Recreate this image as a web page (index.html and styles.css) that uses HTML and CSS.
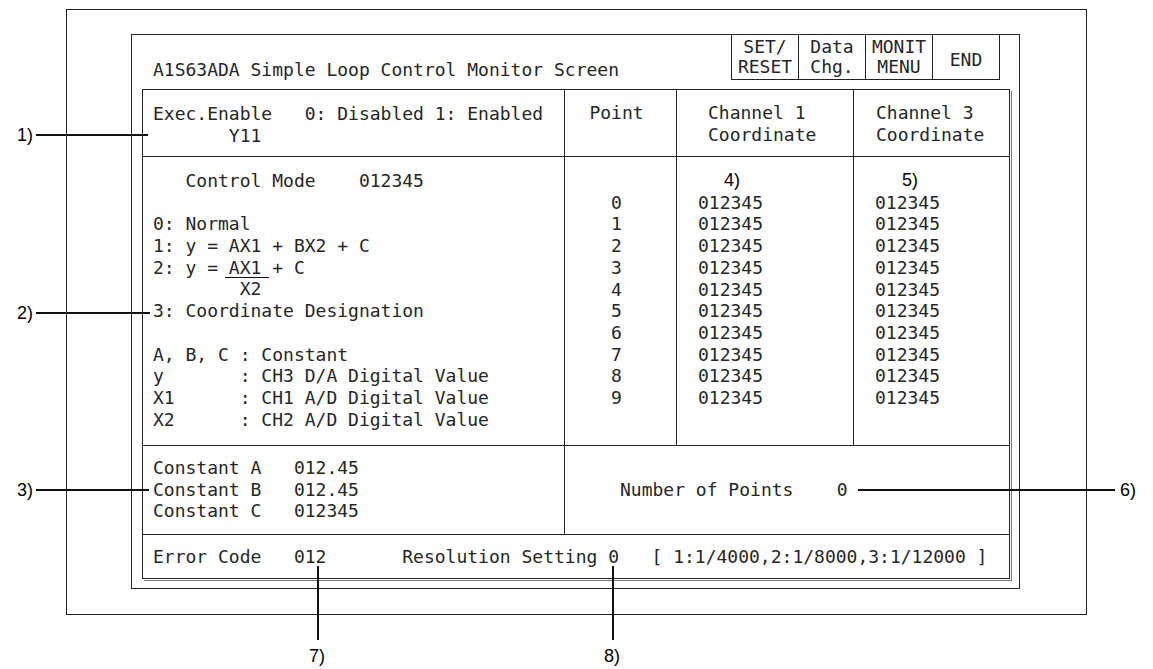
FILE: index.html
```html
<!DOCTYPE html>
<html>
  <head>
    <meta charset="UTF-8">
    <title>A1S63ADA Simple Loop Control Monitor Screen</title>
    <link rel="stylesheet" href="styles.css">
  </head>
  <body>
    <div class="figure">
      <div class="outer">
        <div class="screen">
          <div class="screen-head">
            <div class="title">A1S63ADA Simple Loop Control Monitor Screen</div>
            <div class="keys">
              <div class="key">SET/<br>RESET</div>
              <div class="key">Data<br>Chg.</div>
              <div class="key">MONIT<br>MENU</div>
              <div class="key key-end">END</div>
            </div>
          </div>
          <div class="grid">
            <div class="cell head exec">Exec.Enable   0: Disabled 1: Enabled
       Y11</div>
            <div class="cell head point-head">Point</div>
            <div class="cell head ch-head ch1-head">Channel 1
Coordinate</div>
            <div class="cell head ch-head ch3-head">Channel 3
Coordinate</div>

            <div class="cell data modes">
              <div class="ln">   Control Mode    012345</div>
              <div class="ln"></div>
              <div class="ln">0: Normal</div>
              <div class="ln">1: y = AX1 + BX2 + C</div>
              <div class="ln"><span>2: y = </span><span class="frac">AX1</span><span> + C</span></div>
              <div class="ln">        X2</div>
              <div class="ln">3: Coordinate Designation</div>
              <div class="ln"></div>
              <div class="ln">A, B, C : Constant</div>
              <div class="ln">y       : CH3 D/A Digital Value</div>
              <div class="ln">X1      : CH1 A/D Digital Value</div>
              <div class="ln">X2      : CH2 A/D Digital Value</div>
            </div>
            <div class="cell data points">0
1
2
3
4
5
6
7
8
9</div>
            <div class="cell data values">
              <div class="tag tag-ch1">4)</div>
              <div class="nums">012345
012345
012345
012345
012345
012345
012345
012345
012345
012345</div>
            </div>
            <div class="cell data values">
              <div class="tag tag-ch3">5)</div>
              <div class="nums">012345
012345
012345
012345
012345
012345
012345
012345
012345
012345</div>
            </div>

            <div class="cell constants">Constant A   012.45
Constant B   012.45
Constant C   012345</div>
            <div class="cell num-points">Number of Points    0</div>

            <div class="cell error-row">Error Code   012       Resolution Setting 0   [ 1:1/4000,2:1/8000,3:1/12000 ]</div>
          </div>
        </div>
      </div>

      <!-- callouts -->
      <div class="callout side c1">1)</div>
      <div class="lead l1"></div>
      <div class="callout side c2">2)</div>
      <div class="lead l2"></div>
      <div class="callout side c3">3)</div>
      <div class="lead l3"></div>
      <div class="callout c6">6)</div>
      <div class="lead l6"></div>
      <div class="callout c7">7)</div>
      <div class="lead l7"></div>
      <div class="callout c8">8)</div>
      <div class="lead l8"></div>
    </div>
  </body>
</html>
```

FILE: styles.css
```css
body {
  margin: 0;
  background-color: #FFFFFF;
  color: #262626;
  font-family: "DejaVu Sans Mono", "Liberation Mono", monospace;
  font-size: 18px;
}

.figure {
  position: relative;
  width: 1153px;
  height: 669px;
  padding-top: 9px;
  box-sizing: border-box;
}

.outer {
  width: 1021px;
  height: 606px;
  margin-left: 66px;
  padding: 24px 0 0 64px;
  border: 1px solid #222222;
  box-sizing: border-box;
}

.screen {
  width: 889px;
  height: 555px;
  border: 1px solid #222222;
  box-sizing: border-box;
}

.screen-head {
  display: flex;
  height: 54px;
}

.title {
  padding: 24px 0 0 21px;
  line-height: 22px;
  white-space: pre;
}

.keys {
  display: flex;
  align-self: flex-start;
  margin-left: auto;
  margin-right: 19px;
  border-right: 1px solid #222222;
  border-bottom: 1px solid #222222;
}

.key {
  display: flex;
  align-items: center;
  justify-content: center;
  width: 67px;
  height: 44px;
  border-left: 1px solid #222222;
  box-sizing: border-box;
  text-align: center;
  line-height: 20px;
}

.key-end {
  padding-top: 6px;
}

/* main table */
.grid {
  display: grid;
  grid-template-columns: 421px 111px 176px 155px;
  grid-template-rows: 66px 288px 88px 43px;
  gap: 1px;
  width: 868px;
  height: 490px;
  margin-left: 10px;
  border: 1px solid #222222;
  box-sizing: border-box;
  background-color: #222222;
  box-shadow: 1px 1px 0 0 #FFFFFF, 2px 2px 0 0 #777777;
}

.cell {
  background-color: #FFFFFF;
  white-space: pre;
  line-height: 21.7px;
}

.head {
  padding-top: 12px;
}

.exec {
  padding-top: 13px;
  padding-left: 10px;
}

.point-head {
  text-align: center;
  padding-right: 8px;
}

.ch1-head {
  padding-left: 31px;
}

.ch3-head {
  padding-left: 22px;
}

.data {
  padding-top: 13px;
}

.modes {
  padding-left: 10px;
  white-space: normal;
}

.ln {
  height: 21.7px;
  white-space: pre;
}

/* fraction bar under AX1 */
.frac {
  position: relative;
}

.frac::after {
  content: "";
  position: absolute;
  left: -4px;
  right: -8px;
  bottom: 0;
  height: 1px;
  background-color: #111111;
}

.points {
  padding-top: 34.7px;
  padding-right: 8px;
  text-align: center;
}

.values {
  padding-left: 21px;
  white-space: normal;
}

.nums {
  white-space: pre;
}

.tag {
  font-family: "Liberation Sans", Arial, sans-serif;
  font-size: 18px;
  color: #000000;
}

.tag-ch1 {
  padding-left: 26px;
}

.tag-ch3 {
  padding-left: 27px;
}

.constants {
  padding: 11px 0 0 10px;
}

.num-points {
  grid-column: span 3;
  display: flex;
  align-items: center;
  padding-left: 55px;
}

.error-row {
  grid-column: span 4;
  display: flex;
  align-items: center;
  padding-left: 10px;
}

/* callouts */
.callout {
  position: absolute;
  font-family: "Liberation Sans", Arial, sans-serif;
  font-size: 18px;
  line-height: 20px;
  color: #000000;
}

.callout.side {
  left: 0;
  width: 33px;
  text-align: right;
}

.lead {
  position: absolute;
  background-color: #111111;
}

.c1 { top: 125px; }
.c2 { top: 303px; }
.c3 { top: 480px; }
.c6 { top: 480px; left: 1120px; }
.c7 { top: 646px; left: 309px; }
.c8 { top: 646px; left: 604px; }

.l1 { top: 134px; left: 36px; width: 112px; height: 2px; }
.l2 { top: 312px; left: 36px; width: 114px; height: 2px; }
.l3 { top: 489px; left: 36px; width: 113px; height: 2px; }
.l6 { top: 489px; left: 858px; width: 257px; height: 2px; }
.l7 { top: 566px; left: 317px; width: 2px; height: 74px; }
.l8 { top: 566px; left: 612px; width: 2px; height: 74px; }
```
